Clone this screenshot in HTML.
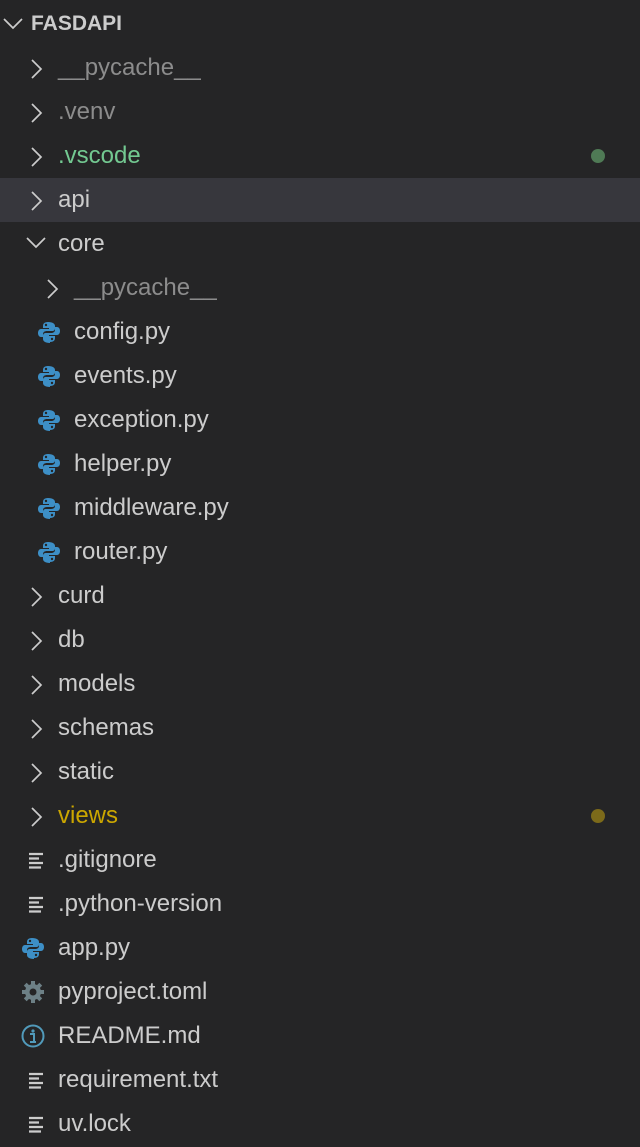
<!DOCTYPE html><html><head><style>
body{margin:0;width:640px;height:1147px;background:#252526;overflow:hidden;font-family:"Liberation Sans",sans-serif;color:#cccccc}
.r{position:absolute;left:0;width:640px;height:44px;font-size:24px;line-height:44px}
.r span{position:absolute;top:0}
svg{position:absolute}
.dot{position:absolute;left:591px;top:15px;width:14px;height:14px;border-radius:50%}
</style></head><body>
<div class="r" style="top:2px;font-weight:bold;font-size:21px"><svg style="left:2px;top:14px" width="22" height="14"><path d="M2 3l9 9 9-9" stroke="#ccc" stroke-width="1.7" fill="none"/></svg><span style="left:31px">FASDAPI</span></div>
<div id="rows"></div>
<script>
var rows=[
["c",1,"__pycache__","dim"],["c",1,".venv","dim"],["c",1,".vscode","g"],["c",1,"api","sel"],["o",1,"core"],
["c",2,"__pycache__","dim"],["p",2,"config.py"],["p",2,"events.py"],["p",2,"exception.py"],["p",2,"helper.py"],["p",2,"middleware.py"],["p",2,"router.py"],
["c",1,"curd"],["c",1,"db"],["c",1,"models"],["c",1,"schemas"],["c",1,"static"],["c",1,"views","y"],
["l",1,".gitignore"],["l",1,".python-version"],["p",1,"app.py"],["g",1,"pyproject.toml"],["i",1,"README.md"],["l",1,"requirement.txt"],["l",1,"uv.lock"]];
var h="";
rows.forEach(function(r,i){
 var top=46+i*44, ind=r[1]==1?0:16, tx=58+ind, st="",col="";
 if(r[3]=="sel")st="background:#37373d;";
 if(r[3]=="dim")col="color:#8c8c8c";
 if(r[3]=="g")col="color:#73c991";
 if(r[3]=="y")col="color:#cca700";
 var ic="";
 if(r[0]=="c")ic='<svg style="left:'+(29+ind)+'px;top:12px" width="16" height="22"><path d="M3 2l9 9-9 9" stroke="#ccc" stroke-width="1.7" fill="none"/></svg>';
 if(r[0]=="o")ic='<svg style="left:'+(25+ind)+'px;top:14px" width="22" height="14"><path d="M2 2l9 9 9-9" stroke="#ccc" stroke-width="1.7" fill="none"/></svg>';
 var px=r[1]==1?22:38;
 if(r[0]=="p")ic='<svg style="left:'+px+'px;top:11px" width="22" height="22" viewBox="0 0 22 22"><path d="M10 1c-4 0-5 2-5 4v2h6v1H3c-2 0-3 2-3 4s1 4 3 4h2v-3c0-2 2-3 4-3h5c2 0 3-1 3-3V5c0-2-2-4-7-4z" fill="#3d8fc6"/><path d="M12 21c4 0 5-2 5-4v-2h-6v-1h8c2 0 3-2 3-4s-1-4-3-4h-2v3c0 2-2 3-4 3H8c-2 0-3 1-3 3v3c0 2 2 4 7 4z" fill="#3d8fc6"/><circle cx="8" cy="4" r="1.2" fill="#252526"/><circle cx="14" cy="18" r="1.2" fill="#252526"/></svg>';
 if(r[0]=="l")ic='<svg style="left:29px;top:14px" width="16" height="18"><path d="M0 2h14M0 6.5h10M0 11h14M0 15.5h12" stroke="#ccc" stroke-width="2.2"/></svg>';
 if(r[0]=="g")ic='<svg style="left:21px;top:10px" width="24" height="24" viewBox="0 0 24 24"><g fill="#6d8086"><circle cx="12" cy="12" r="8"/><rect x="10" y="1" width="4" height="22"/><rect x="10" y="1" width="4" height="22" transform="rotate(45 12 12)"/><rect x="10" y="1" width="4" height="22" transform="rotate(90 12 12)"/><rect x="10" y="1" width="4" height="22" transform="rotate(135 12 12)"/></g><circle cx="12" cy="12" r="3.5" fill="#252526"/></svg>';
 if(r[0]=="i")ic='<svg style="left:21px;top:10px" width="24" height="24" viewBox="0 0 24 24"><circle cx="12" cy="12" r="10.5" stroke="#519aba" stroke-width="2" fill="none"/><circle cx="12" cy="7" r="1.6" fill="#519aba"/><path d="M9 10h4v8M9 18h6" stroke="#519aba" stroke-width="2" fill="none"/></svg>';
 var dot="";
 if(r[3]=="g")dot='<div class="dot" style="background:#4f7a55"></div>';
 if(r[3]=="y")dot='<div class="dot" style="background:#7c6a1a"></div>';
 h+='<div class="r" style="top:'+top+'px;'+st+'">'+ic+'<span style="left:'+tx+'px;'+col+'">'+r[2]+'</span>'+dot+'</div>';
});
document.getElementById("rows").innerHTML=h;
</script>
</body></html>
